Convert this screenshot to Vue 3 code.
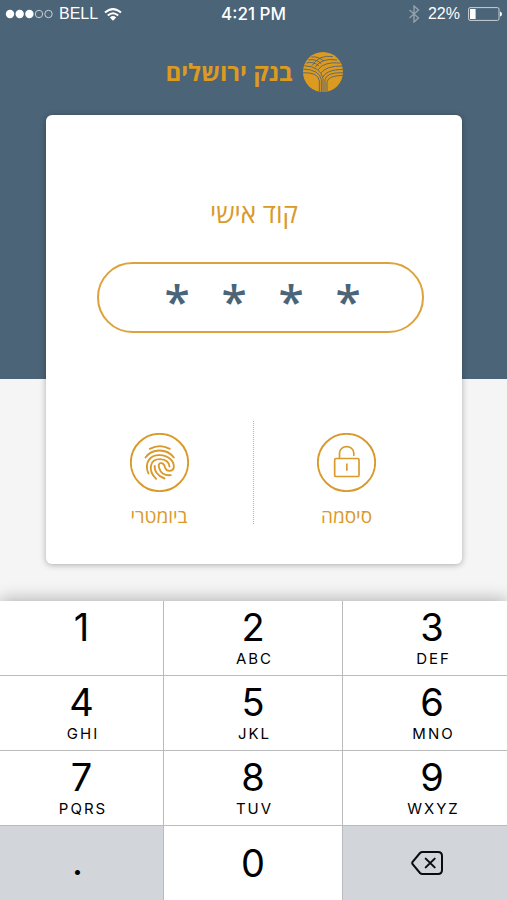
<script setup>
import { ref } from 'vue'

const code = ref(['*', '*', '*', '*'])

const keys = [
  { digit: '1', letters: '' },
  { digit: '2', letters: 'ABC' },
  { digit: '3', letters: 'DEF' },
  { digit: '4', letters: 'GHI' },
  { digit: '5', letters: 'JKL' },
  { digit: '6', letters: 'MNO' },
  { digit: '7', letters: 'PQRS' },
  { digit: '8', letters: 'TUV' },
  { digit: '9', letters: 'WXYZ' },
]

function press() {
  const i = code.value.indexOf('')
  if (i >= 0) code.value[i] = '*'
}

function erase() {
  for (let i = code.value.length - 1; i >= 0; i--) {
    if (code.value[i]) {
      code.value[i] = ''
      return
    }
  }
}
</script>

<template>
  <div class="screen">
    <header class="status">
      <div class="carrier">
        <svg class="signal" viewBox="0 0 48 10" aria-hidden="true">
          <circle cx="5" cy="5" r="4.2" fill="#fff" />
          <circle cx="14.7" cy="5" r="4.2" fill="#fff" />
          <circle cx="24.4" cy="5" r="4.2" fill="#fff" />
          <circle cx="34" cy="5" r="3.7" fill="none" stroke="#c9d1d8" />
          <circle cx="43.5" cy="5" r="3.7" fill="none" stroke="#c9d1d8" />
        </svg>
        <span>BELL</span>
        <svg class="wifi" viewBox="0 0 18 13" aria-hidden="true">
          <g fill="none" stroke="#fff" stroke-width="2">
            <path d="M1 4.6Q9-2.4 17 4.6" />
            <path d="M3.8 7.6Q9 3 14.2 7.6" />
          </g>
          <path d="M5.8 9.4Q9 6.8 12.2 9.4L9 12.8Z" fill="#fff" />
        </svg>
      </div>
      <time class="clock">4:21 PM</time>
      <div class="power">
        <svg class="bluetooth" viewBox="0 0 12 18" aria-hidden="true">
          <path d="M1.5 5L10.5 13L6 17V1L10.5 5L1.5 13" fill="none" stroke="#93a2ae" stroke-width="1.4" />
        </svg>
        <span>22%</span>
        <svg class="battery" viewBox="0 0 34 14" aria-hidden="true">
          <rect x=".6" y=".6" width="30.4" height="12.8" rx="1.5" fill="none" stroke="#c9d1d8" />
          <rect x="2" y="2" width="5.6" height="10" fill="#fff" />
          <path d="M32 4.5Q34 5 34 7T32 9.5Z" fill="#fff" />
        </svg>
      </div>
    </header>

    <main class="login" dir="rtl">
      <div class="brand">
        <svg class="emblem" viewBox="0 0 120 122" aria-hidden="true">
          <clipPath id="disc"><circle cx="60" cy="61" r="60" /></clipPath>
          <circle cx="60" cy="61" r="60" fill="#dc9a20" />
          <g clip-path="url(#disc)" fill="none" stroke="#4b6477" stroke-width="2.6">
            <path d="M49 122V88Q47 62 0 63" />
            <path d="M55 122V84Q50 54 0 52" />
            <path d="M60 122V80Q52 45 4 42" />
            <path d="M66 122V84Q70 62 120 63" />
            <path d="M72 122V90Q76 72 120 71" />
            <path d="M60 76Q70 54 120 53" />
            <path d="M55 63Q70 42 120 43" />
            <path d="M45 54Q64 29 112 34" />
            <path d="M36 47Q56 17 102 25" />
            <path d="M27 42Q48 8 90 15" />
            <path d="M10 34Q32 28 48 43" />
            <path d="M16 25Q38 20 55 36" />
            <path d="M25 16Q46 13 63 29" />
          </g>
        </svg>
        <span class="name">בנק ירושלים</span>
      </div>

      <form class="card" @submit.prevent>
        <h1 id="code-title" class="title">קוד אישי</h1>
        <div class="pin" dir="ltr" role="group" aria-labelledby="code-title">
          <input
            v-for="(c, i) in code"
            :key="i"
            v-model="code[i]"
            class="mark"
            type="text"
            maxlength="1"
            inputmode="numeric"
            aria-labelledby="code-title"
          />
        </div>
        <div class="methods">
          <button type="button" class="method">
            <svg class="badge" viewBox="620.5 71.5 177 177" aria-hidden="true">
              <g fill="none" stroke="#d99a2b" stroke-width="5" stroke-linecap="round">
                <circle cx="709" cy="160" r="86" stroke-width="5.6" />
                <rect x="673.5" y="148" width="73" height="54" rx="4" />
                <path d="M688 147V132C688 106 731 106 731 132V138" />
                <path d="M710 163V185" stroke-linecap="butt" />
              </g>
            </svg>
            <span>סיסמה</span>
          </button>
          <button type="button" class="method">
            <svg class="badge" viewBox="57.5 71.5 177 177" aria-hidden="true">
              <g fill="none" stroke="#d99a2b" stroke-width="5.6" stroke-linecap="round">
                <circle cx="146" cy="160" r="86" />
                <path d="M117 119Q147 103 177 119" />
                <path d="M104 145C124 117 168 117 189 145" />
                <path d="M113 193C98 158 120 137 147 138C172 139 189 155 189 172C189 188 167 189 163 176C160 164 156 161 149 162C138 164 146 186 156 193C164 198 172 199 180 198" />
                <path d="M136 209C110 184 116 150 148 150C166 150 176 161 176 172" />
                <path d="M161 208C139 200 129 182 132 170" />
              </g>
            </svg>
            <span>ביומטרי</span>
          </button>
        </div>
      </form>
    </main>

    <section class="keypad" aria-label="Keypad">
      <button v-for="k in keys" :key="k.digit" type="button" class="key" @click="press">
        <span class="digit">{{ k.digit }}</span>
        <span v-if="k.letters" class="letters">{{ k.letters }}</span>
      </button>
      <button type="button" class="key side dot">.</button>
      <button type="button" class="key zero" @click="press"><span class="digit">0</span></button>
      <button type="button" class="key side delete" aria-label="Delete" @click="erase">
        <svg class="erase" viewBox="0 0 32 24" aria-hidden="true">
          <g fill="none" stroke="#0a0c10" stroke-width="2" stroke-linejoin="round" stroke-linecap="round">
            <path d="M11.5 1H27Q31 1 31 5V19Q31 23 27 23H11.5Q10 23 9 22L1.6 13.2Q.8 12 1.6 10.8L9 2Q10 1 11.5 1Z" />
            <path d="M14.7 7.6L23.7 16.4M23.7 7.6L14.7 16.4" />
          </g>
        </svg>
      </button>
    </section>
  </div>
</template>

<style>
body {
  margin: 0;
}
</style>

<style scoped>
.screen {
  display: flex;
  flex-direction: column;
  min-height: 100vh;
  background: linear-gradient(#4b6477 379px, #f5f5f5 379px);
}

.status {
  display: grid;
  grid-template-columns: 1fr auto 1fr;
  align-items: center;
  height: 28px;
  padding: 0 5px;
  color: #fff;
  font: 16px "Liberation Sans", sans-serif;
}

.carrier,
.power {
  display: flex;
  align-items: center;
  gap: 6px;
}

.power {
  justify-content: flex-end;
  gap: 8px;
}

.signal {
  width: 48px;
  height: 10px;
}

.wifi {
  width: 18px;
  height: 13px;
}

.clock {
  font-size: 17px;
  font-weight: 500;
  font-family: Inter, sans-serif;
}

.bluetooth {
  width: 12px;
  height: 18px;
}

.battery {
  width: 34px;
  height: 14px;
}

.login {
  display: flex;
  flex-direction: column;
  flex: 1;
  padding: 23px 45px 37px 46px;
  font-family: "Open Sans", "Liberation Sans", sans-serif;
}

.brand {
  display: flex;
  justify-content: center;
  align-items: center;
  gap: 10px;
  height: 42px;
  color: #dc9a20;
}

.emblem {
  width: 40px;
  height: 42px;
}

.name {
  font-size: 24px;
  font-weight: 700;
  line-height: 32px;
}

.card {
  display: flex;
  flex-direction: column;
  flex: 1;
  box-sizing: border-box;
  margin-top: 22px;
  padding: 80px 21px 40px;
  border-radius: 6px;
  background: #fff;
  box-shadow: 0 1px 6px rgba(0, 0, 0, 0.3);
  color: #d99a2b;
}

.title {
  margin: 0;
  font-size: 26px;
  font-weight: 400;
  line-height: 36px;
  text-align: center;
}

.pin {
  display: flex;
  justify-content: center;
  box-sizing: border-box;
  height: 71px;
  margin: 31px 17px 0 30px;
  padding: 5px 0 0 4px;
  border: 2px solid #dda23c;
  border-radius: 36px;
}

.mark {
  width: 57px;
  padding: 0;
  border: 0;
  background: none;
  color: #4b6477;
  font: 600 46px "Open Sans", sans-serif;
  text-align: center;
  outline: none;
}

.methods {
  display: grid;
  grid-template-columns: 1fr 1fr;
  margin-top: auto;
}

.method {
  display: flex;
  flex-direction: column;
  align-items: center;
  gap: 16px;
  padding: 12px 2px 0 0;
  border: 0;
  background: none;
  color: inherit;
  font: 19px/16px "Open Sans", "Liberation Sans", sans-serif;
  cursor: pointer;
}

.method + .method {
  border-right: 1px dotted #b5b5b5;
}

.badge {
  width: 59px;
  height: 59px;
}

.keypad {
  display: grid;
  grid-template-columns: 163fr 178fr 164fr;
  grid-auto-rows: 74px;
  gap: 1px;
  background: #b9bbbd;
  box-shadow: 0 -1px 16px rgba(0, 0, 0, 0.3);
}

.key {
  display: flex;
  flex-direction: column;
  align-items: center;
  padding: 3px 0 0;
  border: 0;
  background: #fff;
  color: #000;
  font-family: Inter, sans-serif;
  cursor: pointer;
}

.key:nth-child(3n) {
  padding-left: 14px;
}

.digit {
  font-size: 38px;
  line-height: 46px;
}

.letters {
  padding-left: 3px;
  font-size: 15px;
  line-height: 18px;
  letter-spacing: 2px;
}

.key.side {
  justify-content: center;
  background: #d2d5da;
}

.key.zero {
  justify-content: center;
  padding: 0;
}

.key.dot {
  padding: 0 8px 4px 0;
  font-size: 38px;
}

.key.delete {
  padding: 0 0 0 4px;
}

.erase {
  width: 32px;
  height: 24px;
}
</style>
